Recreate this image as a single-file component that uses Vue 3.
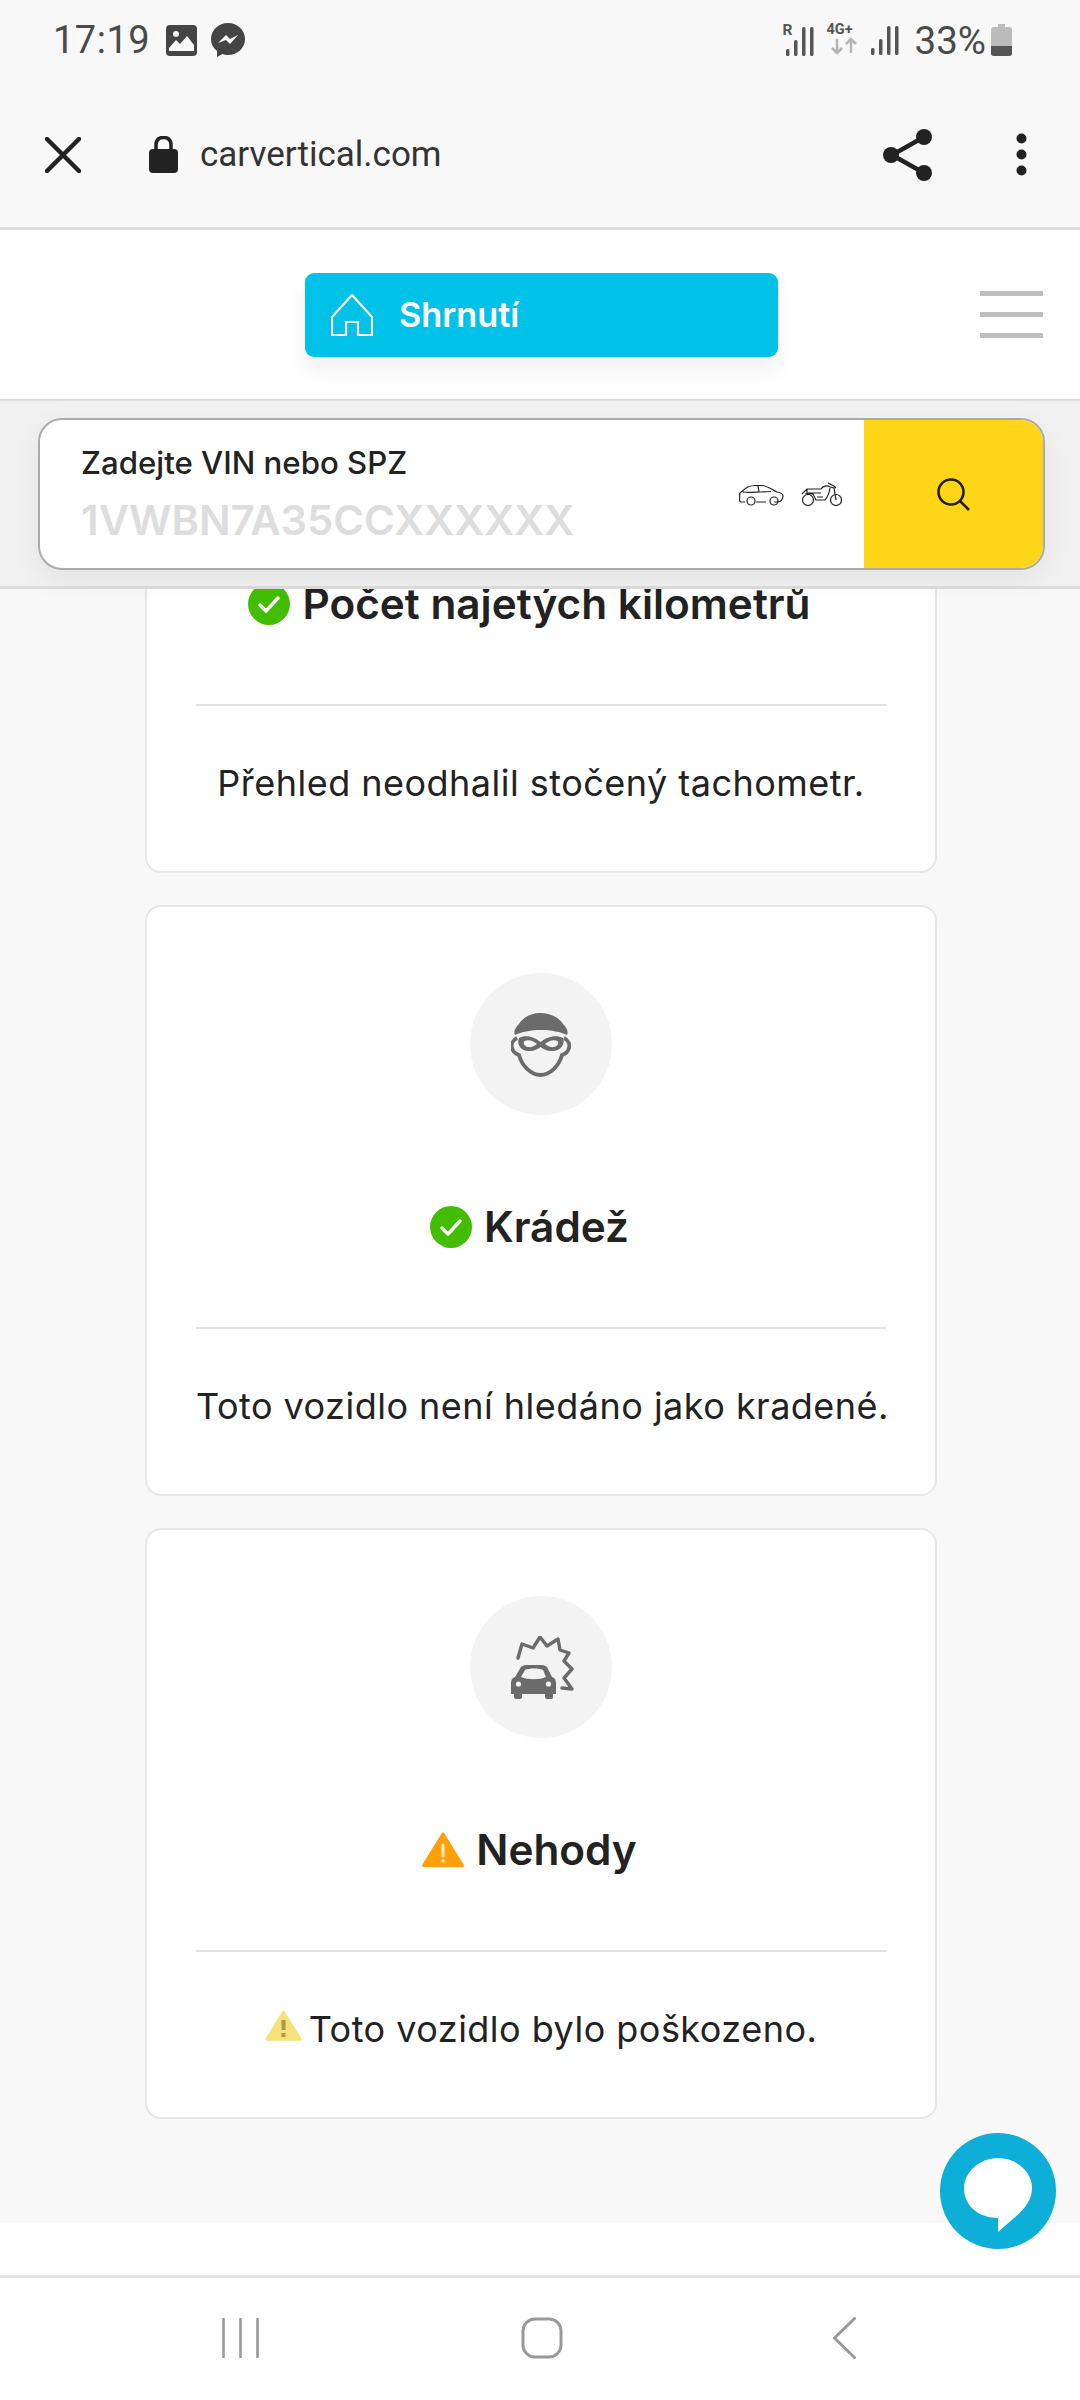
<script setup>
const cards = [
  { id: 1, icon: 'gauge', badge: 'ok', title: 'Počet najetých kilometrů', text: 'Přehled neodhalil stočený tachometr.' },
  { id: 2, icon: 'thief', badge: 'ok', title: 'Krádež', text: 'Toto vozidlo není hledáno jako kradené.' },
  { id: 3, icon: 'crash', badge: 'warn', title: 'Nehody', text: 'Toto vozidlo bylo poškozeno.' }
]
</script>

<template>
  <div class="screen">
    <header class="top">
      <div class="statusbar">
        <span class="time">17:19</span>
        <svg class="st-img" viewBox="0 0 31 31">
          <rect width="31" height="31" rx="4" fill="#444" />
          <circle cx="10" cy="9" r="3" fill="#f8f8f8" />
          <path d="M3 26 L3 23 L10 15 L14 19 L21 11 L28 20 L28 26 Z" fill="#f8f8f8" />
        </svg>
        <svg class="st-msg" viewBox="0 0 34 34">
          <path d="M17 0 C7.5 0 0 7 0 16 C0 21 2 25 6 28 V34 L11.500 31 C13.500 31.700 15 32 17 32 C26.500 32 34 25 34 16 C34 7 26.500 0 17 0 Z" fill="#444" />
          <path d="M7 20 L15 12 L19 16 L27 12 L19 21 L15 17 Z" fill="#f8f8f8" />
        </svg>
        <span class="st-right">
          <span class="sig-wrap">
            <span class="st-r">R</span>
            <svg class="st-sig1" viewBox="0 0 32 32">
              <rect x="3" y="25" width="3.500" height="7" rx="1.500" fill="#555" />
              <rect x="11" y="16" width="3.500" height="16" rx="1.500" fill="#555" />
              <rect x="19" y="3" width="3.500" height="29" rx="1.500" fill="#555" />
              <rect x="27" y="3" width="3.500" height="29" rx="1.500" fill="#555" />
            </svg>
          </span>
          <span class="net-wrap">
            <span class="st-r st-4gt">4G+</span>
            <svg class="st-4g" viewBox="0 0 34 32">
              <path d="M10 15 V29 M5 24 L10 29 L15 24 M24 29 V15 M19 20 L24 15 L29 20" fill="none" stroke="#b5b5b5" stroke-width="2.500" />
            </svg>
          </span>
          <svg class="st-sig2" viewBox="0 0 28 30">
            <rect x="0" y="23" width="3.500" height="7" rx="1.500" fill="#555" />
            <rect x="8" y="14" width="3.500" height="16" rx="1.500" fill="#555" />
            <rect x="16" y="1" width="3.500" height="29" rx="1.500" fill="#555" />
            <rect x="24" y="1" width="3.500" height="29" rx="1.500" fill="#555" />
          </svg>
          <span class="pct">33%</span>
          <svg class="st-bat" viewBox="0 0 21 32">
            <path d="M7 0 H14 V3 H18 C20 3 21 4 21 6 V22 H0 V6 C0 4 1 3 3 3 H7 Z" fill="#bbb" />
            <path d="M0 22 H21 V30 C21 31 20 32 18 32 H3 C1 32 0 31 0 30 Z" fill="#555" />
          </svg>
        </span>
      </div>

      <div class="toolbar">
        <svg class="tb-close" viewBox="0 0 36 36">
          <path d="M2 2 L34 34 M34 2 L2 34" stroke="#222" stroke-width="4.500" stroke-linecap="round" />
        </svg>
        <svg class="tb-lock" viewBox="0 0 29 37">
          <path d="M7 14 V9 C7 4 10 1.500 14.500 1.500 C19 1.500 22 4 22 9 V14" fill="none" stroke="#222" stroke-width="3.500" />
          <rect y="13" width="29" height="24" rx="4" fill="#222" />
        </svg>
        <span class="url">carvertical.com</span>
        <svg class="tb-share" viewBox="0 0 49 52">
          <path d="M41 8 L9 26 L41 44" fill="none" stroke="#222" stroke-width="4.500" />
          <circle cx="41" cy="8" r="8" fill="#222" />
          <circle cx="8" cy="26" r="8" fill="#222" />
          <circle cx="41" cy="44" r="8" fill="#222" />
        </svg>
        <svg class="tb-dots" viewBox="0 0 11 43">
          <circle cx="5.500" cy="5.500" r="5" fill="#222" />
          <circle cx="5.500" cy="21.500" r="5" fill="#222" />
          <circle cx="5.500" cy="37.500" r="5" fill="#222" />
        </svg>
      </div>

      <div class="sitenav">
        <button class="summary">
          <svg class="home" viewBox="0 0 42 42">
            <path d="M21 1 L41 23 V41 H27 V28 H15 V41 H1 V23 Z" fill="none" stroke="#fff" stroke-width="2.200" />
          </svg>
          <span>Shrnutí</span>
        </button>
        <div class="burger">
          <i></i>
          <i></i>
          <i></i>
        </div>
      </div>

      <div class="searchband">
        <div class="searchbox">
          <div class="field">
            <div class="field-label">Zadejte VIN nebo SPZ</div>
            <div class="field-ph">1VWBN7A35CCXXXXXX</div>
          </div>
          <div class="vehicles">
            <svg class="car" viewBox="0 0 45 22">
              <path d="M6 18 H2 C1 18 .6 17 .6 16 V11 C.6 9 1 8 3 7.500 C7 3 11 1.500 16 1.500 H23 C29 2 33 6 38 8 C41 8.500 44 10 44 12 C44 15 42 18 39 18 H35 M17 18 H27 M4 8 C10 9 14 8 32 7.500 M19 2 L20 8" fill="none" stroke="#222" stroke-width="1.200" />
              <circle cx="12" cy="17" r="4" fill="none" stroke="#222" stroke-width="1.200" />
              <circle cx="35" cy="17" r="4" fill="none" stroke="#222" stroke-width="1.200" />
            </svg>
            <svg class="moto" viewBox="0 0 41 24">
              <circle cx="7" cy="18" r="5.500" fill="none" stroke="#222" stroke-width="1.200" />
              <circle cx="35" cy="18" r="5.500" fill="none" stroke="#222" stroke-width="1.200" />
              <path d="M1 12 C3 10 6 7 6 7 H20 C22 4 26 3 29 5 L33 6 L35 18 M6 7 V11 H20 M4 12 H12 L15 18 H24 C27 15 28 12 29 6 M16 15 H22 M27 1 L33 4 L35 6" fill="none" stroke="#222" stroke-width="1.200" />
            </svg>
          </div>
          <div class="gobtn">
            <svg class="search" viewBox="0 0 33 33">
              <circle cx="14" cy="14" r="12.500" fill="none" stroke="#231f10" stroke-width="2.600" />
              <path d="M23 23 L32 32" stroke="#231f10" stroke-width="2.600" />
            </svg>
          </div>
        </div>
      </div>
    </header>

    <main class="content">
      <section v-for="card in cards" :key="card.id" class="card">
        <div class="circle">
          <svg v-if="card.icon === 'thief'" class="ic-thief" viewBox="0 0 60 64">
            <path d="M4 22 C2 18 5 14 8 11 C12 4 21 0 29 0 C38 0 48 4 52 11 C55 14 58 18 56 22 C50 19 40 17 30 17 C20 17 10 19 4 22 Z" fill="#6b6b6b" />
            <path d="M6 25 C2 27 0 31 1 35 C2 39 5 41 8 42 C11 53 20 62 29.500 62 C39 62 48 53 51 42 C54 41 57 39 58 35 C59 31 57 27 53 25" fill="none" stroke="#6b6b6b" stroke-width="3.800" />
            <path d="M8 25 C15 21 24 24 29.500 29 C35 24 45 21 52 25 C55 32 48 39 40 38 C36 38 32 36 29.500 34 C27 36 23 38 19 38 C11 39 5 32 8 25 Z" fill="#6b6b6b" />
            <path d="M13 28.500 C17 26 22 28 26 31 C23 33.500 20 34.500 17 34 C14 33.500 12 31 13 28.500 Z M47 28.500 C43 26 38 28 34 31 C37 33.500 40 34.500 43 34 C46 33.500 48 31 47 28.500 Z" fill="#f3f3f3" />
          </svg>
          <svg v-else-if="card.icon === 'crash'" class="ic-crash" viewBox="0 0 63 64">
            <path d="M7 22 L11 8 L22 12 L29 1 L36 10 L47 3 L49 14 L58 17 L53 25 L61 33 L53 42 L61 53 L51 52" fill="none" stroke="#6b6b6b" stroke-width="3.400" stroke-linecap="round" stroke-linejoin="round" />
            <path d="M10 31 C11 30 13 29 15 29 H31 C33 29 35 30 36 31 L41 41 C44 42 45 44 45 47 V58 H42 V61 C42 63 41 63 40 63 H36 C35 63 34 62 34 61 V58 H11 V61 C11 62 10 63 9 63 H5 C4 63 3 62 3 61 V58 H0 V47 C0 44 1 42 4 41 Z" fill="#6b6b6b" />
            <path d="M10 41 L14 34 C18 32 28 32 32 34 L35 41 C28 44 17 44 10 41 Z" fill="#f3f3f3" />
            <circle cx="7.500" cy="48" r="2.600" fill="#f3f3f3" />
            <circle cx="37.500" cy="48" r="2.600" fill="#f3f3f3" />
          </svg>
          <svg v-else class="ic-thief" viewBox="0 0 60 64">
            <path d="M6 48 A28 28 0 1 1 54 48" fill="none" stroke="#6b6b6b" stroke-width="4" />
            <path d="M30 34 L44 20" stroke="#6b6b6b" stroke-width="4" />
          </svg>
        </div>
        <h3 class="title">
          <svg v-if="card.badge === 'ok'" class="badge" viewBox="0 0 42 42">
            <circle cx="21" cy="21" r="21" fill="#43bd00" />
            <path d="M12 22 L18 28 L30 15" fill="none" stroke="#fff" stroke-width="3.400" stroke-linecap="round" stroke-linejoin="round" />
          </svg>
          <svg v-else class="badge warn" viewBox="0 0 42 36">
            <path d="M21 2 L40.500 33.500 H1.500 Z" fill="#ff9f0a" stroke="#ff9f0a" stroke-width="3" stroke-linejoin="round" />
            <path d="M21 13 V24" stroke="#ffe9b8" stroke-width="3" stroke-linecap="round" />
            <circle cx="21" cy="29" r="1.800" fill="#ffe9b8" />
          </svg>
          {{ card.title }}
        </h3>
        <div class="rule"></div>
        <p class="desc">
          <svg v-if="card.badge === 'warn'" class="mini-warn" viewBox="0 0 37 31">
            <path d="M18.500 2 L35.500 29.500 H1.500 Z" fill="#f6e27a" stroke="#f6e27a" stroke-width="2.500" stroke-linejoin="round" />
            <path d="M18.500 10 V20" stroke="#a99a45" stroke-width="4" />
            <rect x="16.500" y="23" width="4" height="4" fill="#a99a45" />
          </svg>{{ card.text }}
        </p>
      </section>
    </main>

    <nav class="sysnav">
      <svg class="nav-recent" viewBox="0 0 37 40">
        <path d="M1.500 1 V39 M18.500 1 V39 M35.500 1 V39" stroke="#999" stroke-width="2.600" stroke-linecap="round" />
      </svg>
      <svg class="nav-home" viewBox="0 0 42 42">
        <rect x="2" y="2" width="38" height="38" rx="12" fill="none" stroke="#999" stroke-width="3" />
      </svg>
      <svg class="nav-back" viewBox="0 0 23 42">
        <path d="M21.500 1.500 L1.500 21 L21.500 40.500" fill="none" stroke="#999" stroke-width="3" stroke-linecap="round" stroke-linejoin="round" />
      </svg>
    </nav>

    <div class="chat">
      <svg viewBox="0 0 68 74" class="chat-ic">
        <path d="M34 0 C15 0 0 15 0 30 C0 48 15 60 34 60 V74 C52 58 68 48 68 30 C68 13 52 0 34 0 Z" fill="#fff" />
      </svg>
    </div>
  </div>
</template>

<style>
html, body { margin: 0; background: #fff; }
</style>

<style scoped>
.screen {
  position: relative;
  width: 1080px;
  height: 2400px;
  overflow: hidden;
  display: flex;
  flex-direction: column;
  font-family: Inter, "Noto Sans", sans-serif;
  color: #222;
  background: #fff;
}
.top {
  position: relative;
  z-index: 2;
  flex: none;
}
.statusbar {
  height: 80px;
  background: #f8f8f8;
  display: flex;
  align-items: center;
  padding: 0 68px 0 53px;
  font-family: Roboto, sans-serif;
  color: #4a4a4a;
}
.time { font-size: 38px; letter-spacing: .5px; }
.st-img { width: 31px; height: 31px; margin-left: 16px; }
.st-msg { width: 34px; height: 34px; margin-left: 14px; }
.st-right { margin-left: auto; display: flex; align-items: center; }
.sig-wrap, .net-wrap { position: relative; display: block; width: 32px; height: 32px; }
.st-r {
  position: absolute;
  left: 0;
  top: -2px;
  font: 700 15.500px/16px Roboto, sans-serif;
  color: #555;
}
.st-4gt { font-size: 14.500px; }
.st-sig1 { display: block; width: 32px; height: 32px; }
.net-wrap { width: 34px; margin-left: 12px; }
.st-4g { display: block; width: 34px; height: 32px; }
.st-sig2 { width: 28px; height: 30px; margin-left: 10px; }
.pct { font-size: 38.500px; margin-left: 16px; }
.st-bat { width: 21px; height: 32px; margin-left: 5px; }
.toolbar {
  height: 150px;
  box-sizing: border-box;
  background: #f8f8f8;
  border-bottom: 3px solid #ddd;
  display: flex;
  align-items: center;
  padding: 2px 53px 0 45px;
}
.tb-close { width: 36px; height: 36px; }
.tb-lock { width: 29px; height: 37px; margin-left: 68px; }
.url { font: 400 35px Roboto, sans-serif; color: #333; margin-left: 22px; }
.tb-share { width: 49px; height: 52px; margin-left: auto; }
.tb-dots { width: 11px; height: 43px; margin-left: 84px; }
.sitenav {
  height: 171px;
  background: #fff;
  border-bottom: 2px solid #ddd;
  display: flex;
  align-items: center;
  padding: 0 37px 0 305px;
  box-sizing: border-box;
}
.summary {
  width: 473px;
  height: 84px;
  border: 0;
  border-radius: 9px;
  background: #00c1e8;
  color: #fff;
  display: flex;
  align-items: center;
  padding: 0 0 0 26px;
  font: 600 34.300px Inter, sans-serif;
  box-shadow: 0 14px 22px rgba(0, 0, 0, .06);
}
.home { width: 42px; height: 42px; margin-right: 26px; }
.burger {
  margin-left: auto;
  width: 63px;
  display: flex;
  flex-direction: column;
  gap: 16px;
}
.burger i {
  display: block;
  height: 5px;
  border-radius: 1px;
  background: #bdbdbd;
}
.searchband {
  height: 188px;
  box-sizing: border-box;
  background: #f1f1f1;
  border-bottom: 3px solid #ddd;
  padding: 17px 35px 0 38px;
}
.searchbox {
  height: 152px;
  box-sizing: border-box;
  border: 2px solid #aaa;
  border-radius: 24px;
  background: #fff;
  overflow: hidden;
  display: flex;
  box-shadow: 0 10px 30px rgba(0, 0, 0, .06);
}
.field { flex: 1; padding: 23px 0 0 41px; }
.field-label { font-size: 31.200px; line-height: 40px; font-weight: 500; color: #222; }
.field-ph { font-size: 41.700px; line-height: 60px; font-weight: 600; color: #ddd; margin-top: 7px; }
.vehicles { display: flex; align-items: flex-start; padding: 60px 22px 0 0; gap: 17px; }
.car { width: 45px; height: 22px; margin-top: 4px; }
.moto { width: 41px; height: 24px; margin-top: 2px; }
.gobtn {
  width: 179px;
  background: #ffd518;
  display: flex;
  align-items: center;
  justify-content: center;
}
.search { width: 33px; height: 33px; }
.content {
  position: relative;
  flex: 1;
  min-height: 0;
  margin-top: -307px;
  padding: 0 143px 0 145px;
  background: #f8f8f8;
  display: flex;
  flex-direction: column;
  gap: 32px;
  overflow: hidden;
}
.card {
  flex: none;
  background: #fff;
  border: 2px solid #e6e6e6;
  border-radius: 16px;
  padding: 66px 49px 63px;
  display: flex;
  flex-direction: column;
  align-items: stretch;
}
.circle {
  width: 142px;
  height: 142px;
  margin: 0 auto;
  border-radius: 50%;
  background: #f3f3f3;
  display: flex;
  align-items: center;
  justify-content: center;
}
.ic-thief { width: 60px; height: 64px; margin-top: 2px; }
.ic-crash { width: 63px; height: 64px; margin: 2px 0 0 3px; }
.title {
  margin: 87px 0 0;
  padding-right: 23px;
  font-size: 42.300px;
  line-height: 50px;
  font-weight: 600;
  color: #222;
  display: flex;
  align-items: center;
  justify-content: center;
  gap: 12px;
  white-space: nowrap;
}
.badge { width: 42px; height: 42px; flex: none; }
.badge.warn { height: 36px; }
.rule { height: 2px; background: #e2e2e2; margin-top: 75px; }
.desc {
  margin: 52px 0 0;
  font-size: 36px;
  line-height: 50px;
  letter-spacing: .48px;
  text-align: center;
  color: #222;
  white-space: nowrap;
}
.mini-warn { width: 37px; height: 31px; margin-right: 7px; vertical-align: 1px; }
.sysnav {
  flex: none;
  height: 177px;
  box-sizing: border-box;
  background: #fff;
  padding-top: 52px;
  display: flex;
  align-items: center;
  position: relative;
}
.sysnav::before {
  content: "";
  position: absolute;
  top: 52px;
  left: 0;
  right: 0;
  height: 3px;
  background: #e2e2e2;
}
.nav-recent { width: 37px; height: 40px; margin-left: 222px; }
.nav-home { width: 42px; height: 42px; margin-left: 262px; }
.nav-back { width: 23px; height: 42px; margin-left: 270px; }
.chat {
  position: absolute;
  left: 940px;
  top: 2133px;
  z-index: 3;
  width: 116px;
  height: 116px;
  border-radius: 50%;
  background: #0daed8;
  display: flex;
  align-items: center;
  justify-content: center;
}
.chat-ic { width: 68px; height: 74px; margin-top: 8px; }
</style>
